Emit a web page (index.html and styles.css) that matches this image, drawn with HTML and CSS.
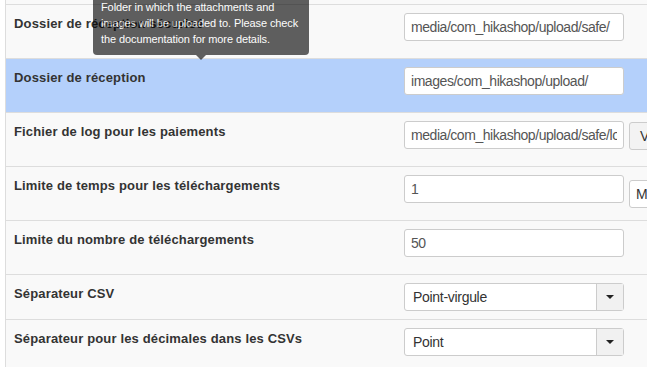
FILE: index.html
```html
<!DOCTYPE html>
<html lang="fr">
<head>
  <meta charset="UTF-8" />
  <title>Configuration HikaShop</title>
  <link rel="stylesheet" href="styles.css">
</head>
<body>
  <div class="config">
    <div class="row">
      <div class="label">Dossier de réception sécurisé</div>
      <div class="field"><input class="text-input" type="text" value="media/com_hikashop/upload/safe/" /></div>
      <div class="tooltip">
        <div class="tooltip-inner">Folder in which the attachments and images will be uploaded to. Please check the documentation for more details.</div>
        <div class="tooltip-arrow"></div>
      </div>
    </div>
    <div class="row selected">
      <div class="label">Dossier de réception</div>
      <div class="field"><input class="text-input" type="text" value="images/com_hikashop/upload/" /></div>
    </div>
    <div class="row">
      <div class="label">Fichier de log pour les paiements</div>
      <div class="field">
        <input class="text-input" type="text" value="media/com_hikashop/upload/safe/logs/report_payment.log" />
        <button class="btn">Voir</button>
      </div>
    </div>
    <div class="row">
      <div class="label">Limite de temps pour les téléchargements</div>
      <div class="field">
        <input class="text-input" type="text" value="1" />
        <span class="small-select">Mois</span>
      </div>
    </div>
    <div class="row">
      <div class="label">Limite du nombre de téléchargements</div>
      <div class="field"><input class="text-input" type="text" value="50" /></div>
    </div>
    <div class="row compact">
      <div class="label">Séparateur CSV</div>
      <div class="field">
        <div class="dropdown"><span class="dropdown-value">Point-virgule</span><span class="dropdown-arrow"><b class="caret"></b></span></div>
      </div>
    </div>
    <div class="row compact">
      <div class="label">Séparateur pour les décimales dans les CSVs</div>
      <div class="field">
        <div class="dropdown"><span class="dropdown-value">Point</span><span class="dropdown-arrow"><b class="caret"></b></span></div>
      </div>
    </div>
  </div>
</body>
</html>
```

FILE: styles.css
```css
:root {
  --row-bg: #f9f9f9;
  --row-border: #dddddd;
  --row-active: #b4d0fb;
  --label-color: #333333;
  --input-border: #cccccc;
  --input-text: #555555;
}

* { box-sizing: border-box; }

body {
  margin: 0;
  background: #ffffff;
  font-family: "Liberation Sans", Arial, sans-serif;
  overflow: hidden;
  height: 367px;
}

.config {
  margin-left: 5px;
  width: 760px;
  padding-top: 4px;
  background: var(--row-bg);
  border-left: 1px solid var(--row-border);
  min-height: 367px;
}

.row {
  position: relative;
  display: grid;
  grid-template-columns: 390px 1fr;
  padding: 8px 8px 8px 8px;
  border-top: 1px solid var(--row-border);
}

.row.selected { background: var(--row-active); }

.label {
  font-size: 13px;
  font-weight: bold;
  line-height: 18px;
  padding-top: 2px;
  letter-spacing: 0.15px;
  color: var(--label-color);
}

.field {
  display: flex;
  align-items: flex-start;
  gap: 5px;
}

.text-input {
  width: 220px;
  height: 28px;
  margin: 0 0 9px 0;
  padding: 4px 6px;
  font-family: inherit;
  font-size: 14px;
  letter-spacing: -0.45px;
  color: var(--input-text);
  background: #ffffff;
  border: 1px solid var(--input-border);
  border-radius: 3px;
  flex: none;
}

.btn {
  height: 28px;
  margin-top: 1px;
  padding: 4px 10px;
  font-family: inherit;
  font-size: 14px;
  color: #333333;
  background: #f3f3f3;
  border: 1px solid var(--input-border);
  border-radius: 3px;
}

.small-select {
  margin-top: 5px;
  height: 28px;
  padding: 5px 6px;
  font-size: 14px;
  color: #333333;
  background: #ffffff;
  border: 1px solid var(--input-border);
  border-radius: 3px;
}

.row.compact .field { height: 28px; }

.dropdown {
  display: flex;
  width: 220px;
  height: 28px;
  background: #ffffff;
  border: 1px solid var(--input-border);
  border-radius: 3px;
  font-size: 14px;
  letter-spacing: -0.3px;
  color: #333333;
}

.dropdown-value {
  flex: 1;
  padding: 5px 8px;
}

.dropdown-arrow {
  width: 27px;
  background: #f1f1f1;
  border-left: 1px solid var(--input-border);
  display: flex;
  align-items: center;
  justify-content: center;
}

.caret {
  border-top: 4px solid #222222;
  border-left: 4px solid transparent;
  border-right: 4px solid transparent;
}

.tooltip {
  position: absolute;
  left: 87px;
  top: -14px;
  width: 216px;
  opacity: 0.62;
  z-index: 2;
}

.tooltip-inner {
  background: #000000;
  color: #ffffff;
  font-size: 11px;
  letter-spacing: -0.1px;
  line-height: 16px;
  padding: 8px;
  border-radius: 4px;
}

.tooltip-arrow {
  width: 0;
  margin: 0 auto;
  border-top: 5px solid #000000;
  border-left: 5px solid transparent;
  border-right: 5px solid transparent;
}
```
